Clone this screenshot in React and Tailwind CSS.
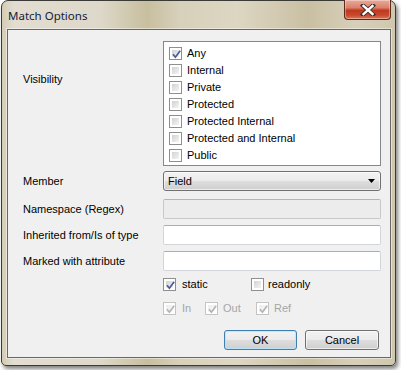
import React from "react";

function Check({ checked, disabled }) {
  return (
    <span
      className={
        "relative inline-flex w-[13px] h-[13px] shrink-0 border bg-white p-[2px] " +
        (disabled ? "border-[#c4c4c4]" : "border-[#8e8f8f]")
      }
    >
      <span
        className={
          "flex-1 " +
          (disabled
            ? "bg-[linear-gradient(135deg,#ececec,#fafafa)]"
            : "bg-[linear-gradient(135deg,#d2d2d2,#f4f4f4)]")
        }
      />
      {checked && (
        <svg className="absolute left-[1px] top-[1px]" width="11" height="11" viewBox="0 0 11 11">
          <path
            d="M2 5.2 L4.4 8.2 L9.2 1.8"
            fill="none"
            stroke={disabled ? "#b3b3b3" : "#4a5a96"}
            strokeWidth="1.7"
            strokeLinejoin="miter"
          />
        </svg>
      )}
    </span>
  );
}

function ListItem({ label, checked }) {
  return (
    <div className="flex items-center h-[17px] gap-[5px]">
      <Check checked={checked} />
      <span>{label}</span>
    </div>
  );
}

function TextBox({ disabled }) {
  return (
    <div
      className={
        "h-[20px] w-[218px] border rounded-[2px] " +
        (disabled
          ? "bg-[#ececec] border-[#c9c9c9] border-t-[#b5b5b5]"
          : "bg-white border-[#d2d5da] border-t-[#abadb3]")
      }
    />
  );
}

function Row({ label, children, className }) {
  return (
    <div className={"flex items-center " + (className || "")}>
      <div className="w-[140px]">{label}</div>
      {children}
    </div>
  );
}

export default function App() {
  return (
    <div
      className="w-[401px] h-[370px] bg-white overflow-hidden text-[11px] text-black"
      style={{ fontFamily: '"Liberation Sans", Arial, sans-serif' }}
    >
      <div className="ml-[1px] w-[395px] h-[366px] flex flex-col border border-[#3a3a36] rounded-t-[7px] rounded-b-[5px] shadow-[2px_3px_4px_rgba(0,0,0,0.5)] bg-[linear-gradient(90deg,#d4ccb3_0%,#e2ddd0_3%,#ddd8c9_25%,#c8bf9f_37%,#d7d0ba_45%,#ddd6c2_60%,#c9c0a3_78%,#d7cfb9_90%,#cfc7ad_100%)]">
        {/* title bar */}
        <div className="h-[28px] flex items-start justify-between pl-[6px] pr-[4px]">
          <div
            className="mt-[6px] text-[11.5px] text-[#14203a]"
            style={{ fontFamily: '"Noto Sans", "Open Sans", sans-serif' }}
          >
            Match Options
          </div>
          <div className="-mt-px w-[47px] h-[20px] rounded-b-[4px] border border-[#5e2a20] border-t-0 bg-[linear-gradient(#e9aa98_0%,#d9826b_40%,#c0391e_55%,#c74a2c_80%,#dc7a5e_100%)] flex items-center justify-center shadow-[inset_0_0_0_1px_rgba(255,255,255,0.35)]">
            <svg width="16" height="12" viewBox="0 0 16 12">
              <path d="M3 1.5 L13 10.5 M13 1.5 L3 10.5" stroke="#3b2a28" strokeWidth="4.2" strokeLinecap="square" />
              <path d="M3.5 2 L12.5 10 M12.5 2 L3.5 10" stroke="#ffffff" strokeWidth="2.4" strokeLinecap="square" />
            </svg>
          </div>
        </div>

        {/* content */}
        <div className="mx-[5px] mr-[4px] h-[329px] border border-[#6a6860] bg-[#f0f0f0] shadow-[0_0_0_1px_rgba(255,255,255,0.45)] pl-[15px] pt-[11px] flex flex-col">
          {/* visibility */}
          <div className="flex items-start">
            <div className="w-[140px] mt-[30px]">Visibility</div>
            <div className="w-[218px] h-[125px] border border-[#828790] bg-white pl-[5px] pt-[3px] flex flex-col">
              <ListItem label="Any" checked />
              <ListItem label="Internal" />
              <ListItem label="Private" />
              <ListItem label="Protected" />
              <ListItem label="Protected Internal" />
              <ListItem label="Protected and Internal" />
              <ListItem label="Public" />
            </div>
          </div>

          <Row label="Member" className="mt-[5px]">
            <div className="h-[20px] w-[218px] border border-[#707070] rounded-[3px] bg-[linear-gradient(#f3f3f3_0%,#ebebeb_48%,#dddddd_52%,#cfcfcf_100%)] shadow-[inset_0_0_0_1px_rgba(255,255,255,0.6)] flex items-center justify-between pl-[4px] pr-[5px]">
              <span>Field</span>
              <svg width="7" height="4" viewBox="0 0 7 4">
                <path d="M0 0 H7 L3.5 4 Z" fill="#000" />
              </svg>
            </div>
          </Row>

          <Row label="Namespace (Regex)" className="mt-[8px]">
            <TextBox disabled />
          </Row>
          <Row label="Inherited from/Is of type" className="mt-[6px]">
            <TextBox />
          </Row>
          <Row label="Marked with attribute" className="mt-[6px]">
            <TextBox />
          </Row>

          <div className="flex items-center mt-[7px] pl-[140px] h-[13px]">
            <div className="flex items-center gap-[6px] w-[88px]">
              <Check checked />
              <span>static</span>
            </div>
            <div className="flex items-center gap-[4px]">
              <Check />
              <span>readonly</span>
            </div>
          </div>

          <div className="flex items-center mt-[11px] pl-[140px] h-[13px] text-[#a6a6a6]">
            <div className="flex items-center gap-[6px] w-[42px]">
              <Check checked disabled />
              <span>In</span>
            </div>
            <div className="flex items-center gap-[5px] w-[51px]">
              <Check checked disabled />
              <span>Out</span>
            </div>
            <div className="flex items-center gap-[5px]">
              <Check checked disabled />
              <span>Ref</span>
            </div>
          </div>

          <div className="flex justify-end gap-[8px] mt-[15px] pr-[11px]">
            <button className="w-[73px] h-[20px] border border-[#3c7fb1] rounded-[3px] bg-[linear-gradient(#f2f2f2_0%,#ebebeb_48%,#dddddd_52%,#cfcfcf_100%)] shadow-[inset_0_0_0_1px_rgba(180,230,255,0.8)] text-[11px] text-black">
              OK
            </button>
            <button className="w-[74px] h-[20px] border border-[#707070] rounded-[3px] bg-[linear-gradient(#f2f2f2_0%,#ebebeb_48%,#dddddd_52%,#cfcfcf_100%)] shadow-[inset_0_0_0_1px_rgba(255,255,255,0.6)] text-[11px] text-black">
              Cancel
            </button>
          </div>
        </div>
      </div>
    </div>
  );
}
